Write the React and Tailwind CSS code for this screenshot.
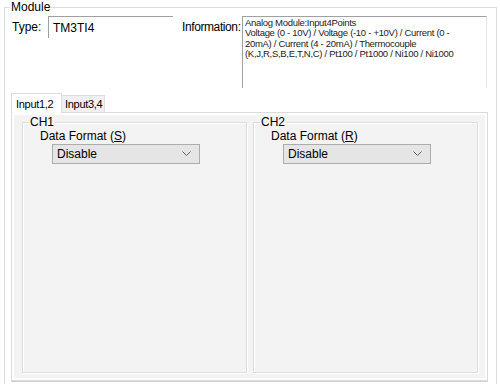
import React from "react";

const Chevron = () => (
  <svg width="9" height="6" viewBox="0 0 9 6" className="shrink-0">
    <path d="M0.5 0.5 L4.5 4.5 L8.5 0.5" fill="none" stroke="#606060" strokeWidth="1" />
  </svg>
);

const Combo = ({ value }) => (
  <div className="w-[148px] h-[20px] bg-[#e5e5e5] border border-[#acacac] flex items-center justify-between pl-[4px] pr-[8px]">
    <span className="text-[12px] leading-[14px]">{value}</span>
    <Chevron />
  </div>
);

const ChannelGroup = ({ name, key2 }) => (
  <fieldset className="w-[225px] h-[258px] border border-[#dcdcdc] shadow-[inset_1px_1px_0_#ffffff,1px_1px_0_#ffffff]">
    <legend className="ml-[6px] px-[1px] text-[12px] leading-[14px]">{name}</legend>
    <div className="pl-[17px] pt-[0px] text-[12px] leading-[14px]">
      Data Format (<span className="underline">{key2}</span>)
    </div>
    <div className="pl-[29px] pt-[1px]">
      <Combo value="Disable" />
    </div>
  </fieldset>
);

const App = () => {
  const info =
    "Analog Module:Input4Points\nVoltage (0 - 10V) / Voltage (-10 - +10V) / Current (0 -\n20mA) / Current (4 - 20mA) / Thermocouple\n(K,J,R,S,B,E,T,N,C) / Pt100 / Pt1000 / Ni100 / Ni1000";
  return (
    <div className="w-[500px] h-[384px] bg-white overflow-hidden text-black font-['Liberation_Sans',Arial,sans-serif]">
      <fieldset className="ml-[4px] w-[493px] h-[420px] border border-[#dcdcdc]">
        <legend className="ml-[5px] px-[1px] text-[12px] leading-[14px]">Module</legend>

        <div className="flex items-start pt-[2px]">
          <div className="w-[36px] ml-[7px] pt-[4px] text-[12px] leading-[14px]">Type:</div>
          <div className="w-[125px] h-[22px] border-t border-l border-t-[#a0a0a0] border-l-[#a0a0a0] pl-[4px] pt-[4px] text-[12px] leading-[14px]">
            TM3TI4
          </div>
          <div className="w-[60px] ml-[9px] pt-[4px] text-[12px] leading-[14px] tracking-[-0.4px] whitespace-nowrap">
            Information:
          </div>
          <div className="w-[245px] h-[72px] border-t border-l border-t-[#a0a0a0] border-l-[#a0a0a0] border-r border-r-[#e3e3e3] pl-[2px] pt-[1px] text-[9.5px] leading-[10.4px] tracking-[-0.3px] whitespace-pre text-[#222]">
            {info}
          </div>
        </div>

        <div className="ml-[6px] mt-[5px] w-[477px]">
          <div className="flex items-end h-[19px]">
            <div className="h-[20px] w-[51px] -mb-[1px] bg-white border border-b-0 border-[#dcdcdc] text-[11px] leading-[16px] px-[4px] pt-[2px] tracking-[-0.3px] relative z-10">
              Input1,2
            </div>
            <div className="h-[17px] w-[43px] bg-[#f0f0f0] border border-l-0 border-b-0 border-[#dcdcdc] text-[11px] leading-[15px] px-[3px] pt-[1px] tracking-[-0.3px]">
              Input3,4
            </div>
          </div>
          <div className="h-[269px] border border-[#dcdcdc] bg-white p-[2px] shadow-[0_1px_0_#d0d0d0]">
            <div className="h-full bg-[#f3f3f3] flex gap-[6px] pl-[8px] pt-[0px]">
              <ChannelGroup name="CH1" key2="S" />
              <ChannelGroup name="CH2" key2="R" />
            </div>
          </div>
        </div>
      </fieldset>
    </div>
  );
};

export default App;
